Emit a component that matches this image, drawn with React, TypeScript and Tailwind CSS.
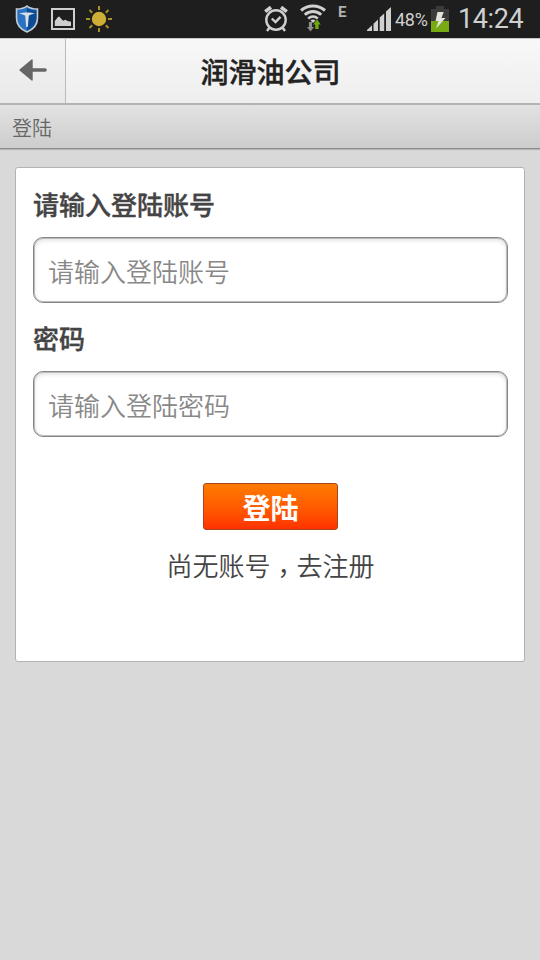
import type { ReactNode } from 'react';

function ShieldIcon() {
  return (
    <svg className="w-6 h-7" viewBox="0 0 24 28">
      <path d="M12 1 C9 3.5 5 4 1.5 4 V13 C1.5 20 6 24.5 12 27 C18 24.5 22.5 20 22.5 13 V4 C19 4 15 3.5 12 1Z" fill="#2a72c4" stroke="#c4ccd2" strokeWidth="1.6" />
      <path d="M12 3 C15 5 18 5.3 21.3 5.3 V13 C21.3 19 17.5 23 12 25.4Z" fill="#0d4b93" />
      <path d="M4 8.7 C8 7 16 7 20 8.7 C17 9 15 9.5 13.8 10.8 L12.8 22 H11.2 L10.2 10.8 C9 9.5 7 9 4 8.7Z" fill="#d9e0e6" />
    </svg>
  );
}

function PictureIcon() {
  return (
    <svg className="w-6 h-[22px]" viewBox="0 0 24 22">
      <rect x="1" y="1" width="22" height="20" fill="none" stroke="#cfcfcf" strokeWidth="2" />
      <path d="M3.8 18 V13 L7 9 L8.2 8.6 L12 12.7 L14.5 11.8 L16.5 13 L20 13.8 V18Z" fill="#cfcfcf" />
    </svg>
  );
}

function SunIcon() {
  return (
    <svg className="w-[26px] h-[26px]" viewBox="0 0 26 26">
      <circle cx="13" cy="13" r="7.2" fill="#cfae38" />
      <path d="M13 0V4 M13 22V26 M0 13H4 M22 13H26 M3.5 4L6.2 6.7 M19.8 19.3L22.5 22 M3.5 22L6.2 19.3 M19.8 6.7L22.5 4" stroke="#a99028" strokeWidth="2" />
    </svg>
  );
}

function AlarmIcon() {
  return (
    <svg className="w-6 h-[26px]" viewBox="0 0 24 26" fill="none" stroke="#d0d0d0">
      <circle cx="12" cy="14" r="9.7" strokeWidth="2.4" />
      <path d="M7.8 12.5L11.5 16L16.5 10.8" strokeWidth="2.4" />
      <path d="M1.2 5.6L7 1.2 M17 1.2L22.8 5.6" strokeWidth="3.6" />
      <path d="M5.5 21.5L3 25 M18.5 21.5L21 25" strokeWidth="2.4" />
    </svg>
  );
}

function WifiIcon() {
  return (
    <svg className="w-[26px] h-7" viewBox="0 0 26 28" fill="none">
      <path d="M1 6.5C8 .5 18 .5 25 6.5" stroke="#d0d0d0" strokeWidth="3.2" />
      <path d="M4.8 10.8C9.5 6.3 16.5 6.3 21.2 10.8" stroke="#d0d0d0" strokeWidth="2.9" />
      <path d="M8.2 14.6C11 11.8 15 11.8 17.8 14.6" stroke="#d0d0d0" strokeWidth="2.6" />
      <path d="M10.5 16.6C12 15.2 14 15.2 15.5 16.6L13 19Z" fill="#d0d0d0" />
      <path d="M8.9 18H12.1V23H14L10.5 27.5L7 23H8.9Z" fill="#8d8d8d" />
      <path d="M15.2 25V20.5H13.2L17 15.5L20.8 20.5H18.6V25Z" fill="#6fa80c" />
    </svg>
  );
}

function SignalIcon() {
  return (
    <svg className="w-6 h-6" viewBox="0 0 24 24" fill="#d0d0d0">
      <path d="M0 24V23L5 18.3V24Z M6.5 24V16.8L11 12.5V24Z M12.7 24V10.5L17.2 6.5V24Z M19 24V4.6L24 0V24Z" />
    </svg>
  );
}

function BatteryIcon() {
  return (
    <svg className="w-[18px] h-[26px]" viewBox="0 0 18 26">
      <path d="M5 0H13V3H18V15H0V3H5Z" fill="#3b3b3b" />
      <path d="M0 15H18V26H0Z" fill="#78ab13" />
      <path d="M6.5 6H12.7L10.5 12H14.5L5 22.5L7.5 15H4.5Z" fill="#e2e4dc" />
    </svg>
  );
}

function BackArrow() {
  return (
    <svg className="w-7 h-[22px]" viewBox="0 0 28 22">
      <path d="M1 11L13 1V21Z" fill="#666" stroke="#666" strokeWidth="1.4" strokeLinejoin="round" />
      <path d="M12 11H26" stroke="#666" strokeWidth="3.6" strokeLinecap="round" />
    </svg>
  );
}

function StatusBar() {
  return (
    <div className="h-[38px] bg-[#1e1e1e] flex items-start justify-between font-[Roboto,sans-serif] text-[#d0d0d0]">
      <div className="flex items-start pl-[15px]">
        <div className="pt-[5px]"><ShieldIcon /></div>
        <div className="pt-2 pl-3"><PictureIcon /></div>
        <div className="pt-1.5 pl-[11px]"><SunIcon /></div>
      </div>
      <div className="flex items-start">
        <div className="pt-1.5"><AlarmIcon /></div>
        <div className="pt-1 pl-3"><WifiIcon /></div>
        <span className="pt-[3px] pl-3 w-[41px] text-[15px] leading-[18px] font-bold text-[#b0b0b0]">E</span>
        <div className="pt-[7px]"><SignalIcon /></div>
        <span className="pt-2 pl-1 w-10 text-lg leading-6 whitespace-nowrap tracking-[-0.3px]">48%</span>
        <div className="pt-1.5"><BatteryIcon /></div>
        <span className="pt-1 pl-[9px] w-[91px] text-[27px] leading-[30px] whitespace-nowrap tracking-[-0.4px]">14:24</span>
      </div>
    </div>
  );
}

function Field({ label, children }: { label: string; children: ReactNode }) {
  return (
    <label className="block">
      <span className="block h-[52px] text-[26px] leading-[37px] font-medium [-webkit-text-stroke:0.4px_#444] text-[#444]">{label}</span>
      {children}
    </label>
  );
}

const inputClass =
  'block w-[475px] h-[66px] px-3.5 pt-px rounded-[10px] border border-[#858585] bg-white text-[26px] font-[350] text-[#444] placeholder:text-[#888] shadow-[inset_0_0_0_1px_#bdbdbd,inset_0_2px_5px_rgba(0,0,0,0.14)] outline-none';

export default function App() {
  return (
    <div className="w-[540px] h-[960px] overflow-hidden bg-[#d9d9d9] font-['Noto_Sans_CJK_SC',sans-serif]">
      <StatusBar />
      <header className="h-[67px] flex bg-linear-to-b from-[#f8f8f8] to-[#eee] border-t border-t-[#c8c8c8] border-b-2 border-b-[#b3b3b3]">
        <button className="w-[66px] flex items-center justify-center pb-0.5 border-r border-[#bbb] bg-linear-to-b from-[#f3f3f3] to-[#e9e9e9]">
          <BackArrow />
        </button>
        <h1 className="w-[409px] pt-3 text-center text-[28px] leading-[40px] font-medium [-webkit-text-stroke:0.4px_#222] text-[#222]">润滑油公司</h1>
      </header>
      <div className="h-11 pl-3 pt-2 text-xl leading-[30px] font-[350] text-[#666] bg-linear-to-b from-[#e2e2e2] to-[#cdcdcd] border-b border-[#8c8c8c] shadow-[0_1px_1px_#b5b5b5]">
        登陆
      </div>
      <main className="mx-[15px] mt-[18px] h-[495px] pl-[17px] pt-[17px] pr-4 rounded-[3px] border border-[#b3b3b3] bg-white">
        <Field label="请输入登陆账号">
          <input type="text" placeholder="请输入登陆账号" className={inputClass} />
        </Field>
        <div className="h-4" />
        <Field label="密码">
          <input type="password" placeholder="请输入登陆密码" className={inputClass} />
        </Field>
        <div className="flex flex-col items-center pt-[46px]">
          <button className="w-[135px] h-[47px] rounded-[3px] border border-[#a8441c] bg-linear-to-b from-[#ff7b00] to-[#ff3000] text-[28px] leading-[40px] font-bold text-white">
            登陆
          </button>
          <a className="mt-4 flex text-[26px] leading-[38px] font-[350] text-[#444]">
            <span>尚无账号</span>
            <span className="font-['Noto_Sans_CJK_TC',sans-serif] pt-[7px] h-[38px]" lang="zh-TW">，</span>
            <span>去注册</span>
          </a>
        </div>
      </main>
    </div>
  );
}
